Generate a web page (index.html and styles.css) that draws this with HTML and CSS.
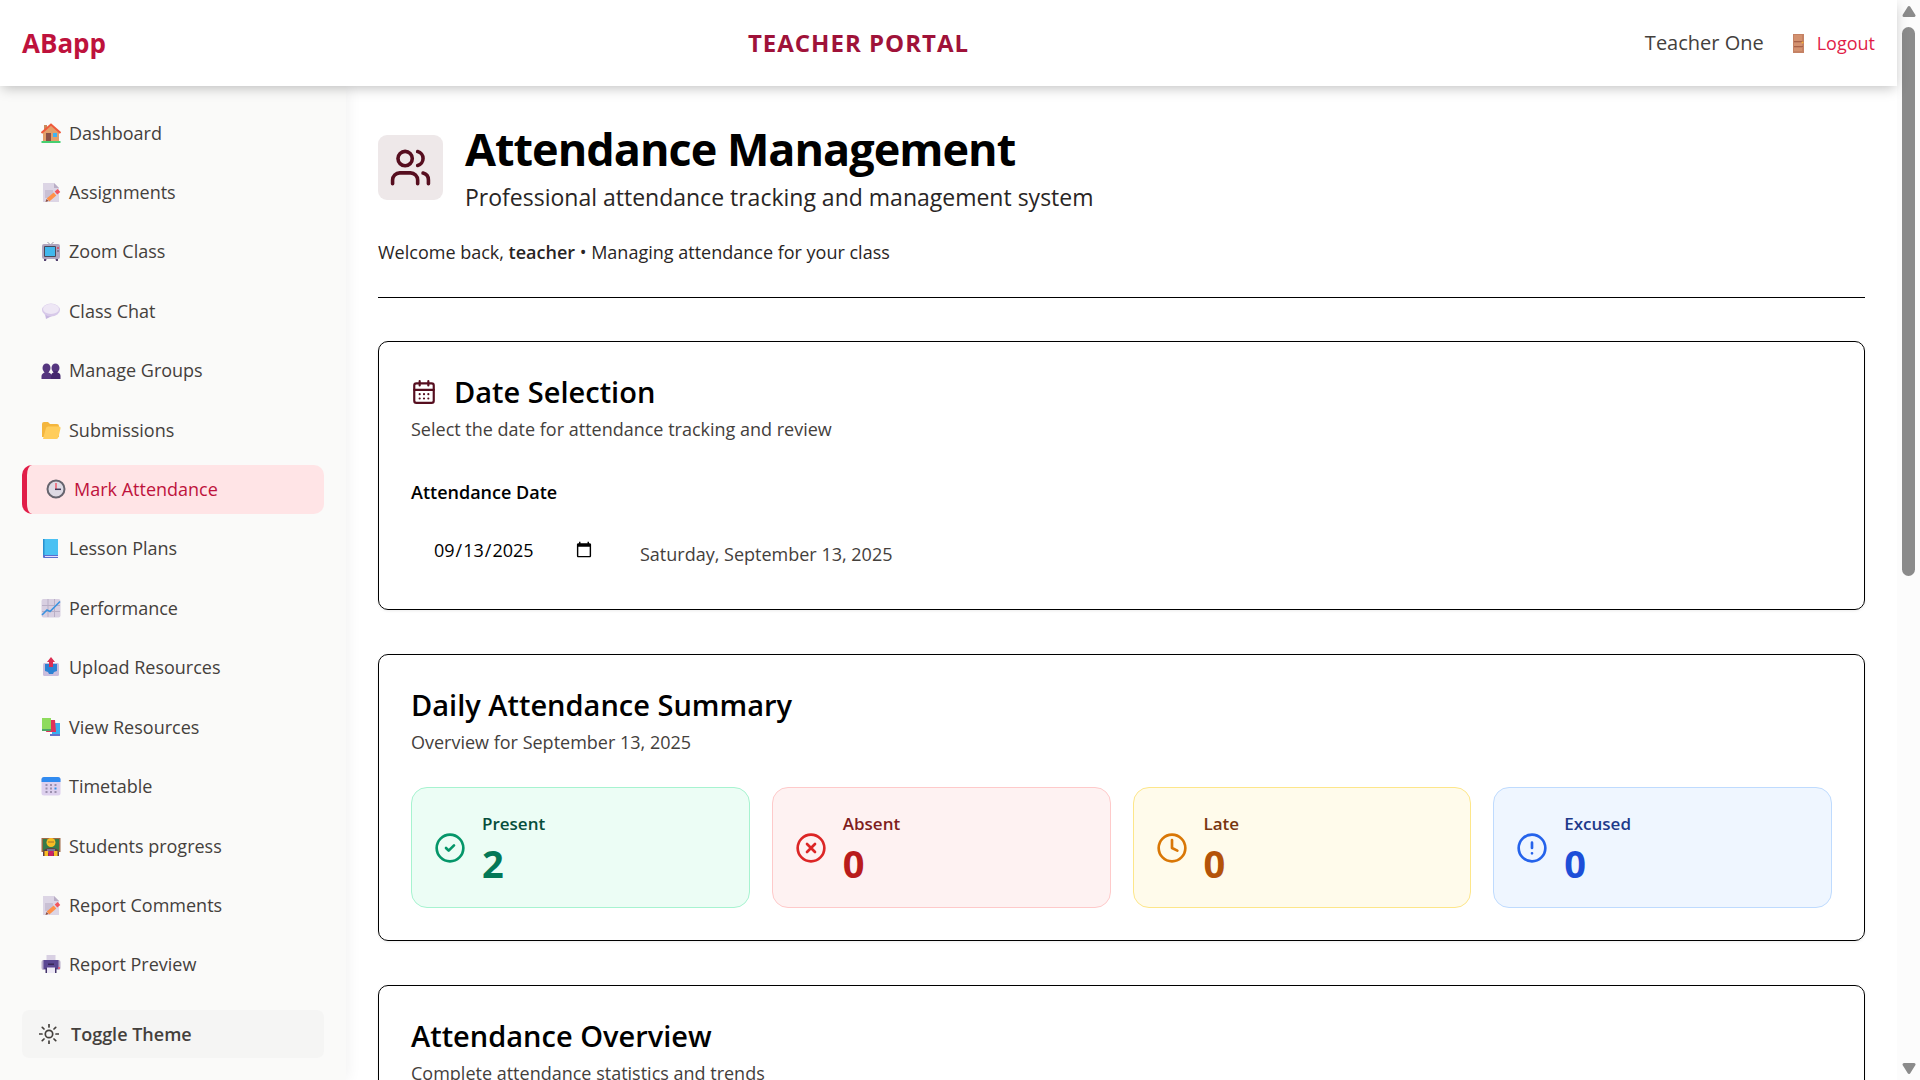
FILE: index.html
```html
<!DOCTYPE html>
<html lang="en">
<head>
<meta charset="utf-8">
<meta name="viewport" content="width=device-width, initial-scale=1">
<title>ABapp Teacher Portal</title>
<link rel="stylesheet" href="styles.css">
</head>
<body>
<div class="app">
  <header class="topbar">
    <a class="logo" href="#">ABapp</a>
    <div class="portal">TEACHER PORTAL</div>
    <div class="account">
      <span class="user">Teacher One</span>
      <button class="logout" type="button">
        <svg class="emoji" viewBox="0 0 20 20" aria-hidden="true"><path fill="#c58264" d="M5 1h11v19H5z"/><path fill="#d3916f" d="M6 2h8v6H6zM6 10h8v3H6zM6 15h8v3H6z"/><path stroke="#a86148" d="M6 8.500h9M6 13.500h9"/><circle cx="14.500" cy="9.500" r="1" fill="#f5b43c"/></svg>
        Logout
      </button>
    </div>
  </header>

  <div class="body">
    <aside class="sidebar">
      <nav class="nav" aria-label="Main">
        <a class="item" href="#"><svg class="emoji" viewBox="0 0 20 20" aria-hidden="true"><path fill="#c98a5b" d="M3 2h3v6H3z"/><path fill="#e3a06b" d="M2 9l8-7 8 7v10H2z"/><path fill="none" stroke="#ef5a3c" stroke-width="2" d="M.500 10L10 1.500 19.500 10"/><path fill="#8b5147" d="M5 10h5v9H5z"/><path fill="#3fb4f2" d="M12 10h4v4h-4z"/><path fill="#45cf70" d="M.500 18h19v2H.500z"/></svg>Dashboard</a>
        <a class="item" href="#"><svg class="emoji" viewBox="0 0 20 20" aria-hidden="true"><path fill="#dcd5e5" d="M2 1h11l5 5v14H2z"/><path fill="#b9aec6" d="M13 1l5 5h-5z"/><path fill="#c9c0d4" d="M4 8h8v8H4z"/><path stroke="#ff9149" stroke-width="4" d="M7 18l7-6"/><path stroke="#f2555c" stroke-width="4" d="M15 11l3-2.500"/><path fill="#8a4a3c" d="M4.500 20l1-3 2 2z"/></svg>Assignments</a>
        <a class="item" href="#"><svg class="emoji" viewBox="0 0 20 20" aria-hidden="true"><path fill="none" stroke="#9c98a5" d="M6.500 1l3 3 3-3"/><path fill="#54416f" d="M3 16h3l-1 4H3zM14 16h3v4h-2z"/><rect x="1" y="3" width="18" height="15" rx="2" fill="#b0a5be"/><rect x="3" y="5" width="12" height="11" rx="1" fill="#4b4859"/><path fill="#41b8ed" d="M4 6h10v9H4z"/><circle cx="17" cy="7" r="1" fill="#d9425a"/><circle cx="17" cy="10" r="1" fill="#756a84"/></svg>Zoom Class</a>
        <a class="item" href="#"><svg class="emoji" viewBox="0 0 20 20" aria-hidden="true"><path fill="#c6b5df" d="M4 13l1 5 6-3z"/><ellipse cx="10" cy="9" rx="9" ry="6.500" fill="#d7c9e9"/><ellipse cx="10" cy="8" rx="8" ry="5" fill="#eee7f5"/></svg>Class Chat</a>
        <a class="item" href="#"><svg class="emoji" viewBox="0 0 20 20" aria-hidden="true"><g fill="#54357f"><ellipse cx="5.500" cy="8" rx="4" ry="4.500"/><path d="M.500 19v-3c0-2 2-3 3-3.500V11h4v1.500c2 .500 3 1.500 3 3.500v3z"/><ellipse cx="14.500" cy="8" rx="4" ry="4.500"/></g><path fill="#45286f" d="M10 19v-3c0-2 1-3 2.500-3.500V11h4v1.500c2 .500 3 1.500 3 3.500v3z"/></svg>Manage Groups</a>
        <a class="item" href="#"><svg class="emoji" viewBox="0 0 20 20" aria-hidden="true"><path fill="#f4b63e" d="M1 4q0-2 2-2h4l2 2h7q2 0 2 2v11H1z"/><path fill="#ffcd5c" d="M5 8q.400-1.500 2-1.500h11q2 0 1.500 2L17.500 17q-.500 2-2 2H2z"/></svg>Submissions</a>
        <a class="item active" href="#" aria-current="page"><svg class="emoji" viewBox="0 0 20 20" aria-hidden="true"><circle cx="10" cy="10" r="8.500" fill="#dedae4" stroke="#66646e" stroke-width="2"/><path stroke="#f05a6b" stroke-width="1.500" d="M10 4v6"/><path stroke="#433957" stroke-width="1.500" d="M9 10.300h6"/></svg>Mark Attendance</a>
        <a class="item" href="#"><svg class="emoji" viewBox="0 0 20 20" aria-hidden="true"><path fill="#4bc1f3" d="M2 1h15v16H2z"/><path fill="#2990cf" d="M2 1h1.500v16H2z"/><path fill="#5a6fd0" d="M2 17h15v3H3q-1 0-1-1z"/><path stroke="#e4dfff" d="M4 18.500h13"/></svg>Lesson Plans</a>
        <a class="item" href="#"><svg class="emoji" viewBox="0 0 20 20" aria-hidden="true"><rect x=".500" y="1" width="19" height="18.500" rx="2" fill="#d8cfe1"/><path stroke="#b9afc6" d="M7 1v18M13.500 1v18M1 7.500h18M1 13.500h18"/><path fill="none" stroke="#3b93df" stroke-width="1.600" d="M1 17l5-5 3 1.500L19 3.500"/></svg>Performance</a>
        <a class="item" href="#"><svg class="emoji" viewBox="0 0 20 20" aria-hidden="true"><rect x="2" y="6" width="16" height="13" rx="1.500" fill="#c9bddd"/><path fill="#2c82d4" d="M4 7h12v7l-3 1-1 2H8l-1-2-3-1z"/><path fill="#dc2e53" d="M10 0l4 5h-2v5H8V5H6z"/></svg>Upload Resources</a>
        <a class="item" href="#"><svg class="emoji" viewBox="0 0 20 20" aria-hidden="true"><path fill="#38aef0" d="M11 6h8v11h-8z"/><path fill="#6572cb" d="M9 17h10v2H9z"/><path fill="#df315b" d="M8 3h6l1 12H5z"/><path fill="#8edb5d" d="M1 1h9v11H1z"/><path fill="#4da767" d="M1 12h9v2H1z"/></svg>View Resources</a>
        <a class="item" href="#"><svg class="emoji" viewBox="0 0 20 20" aria-hidden="true"><rect x=".500" y="1" width="19" height="18.500" rx="2.500" fill="#ddd0ee"/><path fill="#318bf0" d="M.500 6V3.500Q.500 1 3 1h14q2.500 0 2.500 2.500V6z"/><g fill="#9b8fae"><path d="M4.500 8h2v2h-2zM9 8h2v2H9zM13.500 8h2v2h-2zM4.500 11.500h2v2h-2zM9 11.500h2v2H9zM4.500 15h2v2h-2zM9 15h2v2H9zM13.500 15h2v2h-2z"/></g><path fill="#2f91ec" d="M13.500 11.500h2v2h-2z"/></svg>Timetable</a>
        <a class="item" href="#"><svg class="emoji" viewBox="0 0 20 20" aria-hidden="true"><path fill="#a06a46" d="M.500 2h19v14H.500z"/><path fill="#377b4a" d="M2 3h16v12H2z"/><path fill="#623d43" d="M2 20v-4q1-4 8-4t8 4v4z"/><circle cx="10" cy="6.500" r="4.500" fill="#f9bd24"/><path stroke="#a77129" d="M7 6h6"/><path fill="#7a7390" d="M6 13h8v4H6z"/><path fill="#ca2265" d="M7.500 15h5v5h-5z"/><path fill="#f9bd24" d="M3.500 15H7v5H3.500zM13 15h3.500v5H13z"/></svg>Students progress</a>
        <a class="item" href="#"><svg class="emoji" viewBox="0 0 20 20" aria-hidden="true"><path fill="#dcd5e5" d="M2 1h11l5 5v14H2z"/><path fill="#b9aec6" d="M13 1l5 5h-5z"/><path fill="#c9c0d4" d="M4 8h8v8H4z"/><path stroke="#ff9149" stroke-width="4" d="M7 18l7-6"/><path stroke="#f2555c" stroke-width="4" d="M15 11l3-2.500"/><path fill="#8a4a3c" d="M4.500 20l1-3 2 2z"/></svg>Report Comments</a>
        <a class="item" href="#"><svg class="emoji" viewBox="0 0 20 20" aria-hidden="true"><path fill="#d8d0e3" d="M5.500 1h9v7h-9z"/><rect x=".500" y="6" width="19" height="10" rx="2" fill="#b7acc9"/><path fill="#5a4792" d="M2.500 6h15v9h-15z"/><path fill="#372758" d="M7 9.500h6v1.500H7z"/><path fill="#42336a" d="M4.500 14h11v5h-11z"/><path fill="#eee9f6" d="M6 13.500h8V19H6z"/><circle cx="18" cy="14" r="1" fill="#ea5067"/></svg>Report Preview</a>
      </nav>
      <button class="toggle" type="button">
        <svg class="sun" viewBox="0 0 20 20" aria-hidden="true"><circle cx="10" cy="10" r="3.700"/><path d="M10 .500v2.500M10 17v2.500M.500 10H3M17 10h2.500M3.300 3.300L5 5M15 15l1.700 1.700M16.700 3.300L15 5M5 15l-1.700 1.700"/></svg>
        Toggle Theme
      </button>
    </aside>

    <main class="main">
      <div class="page-head">
        <div class="head-row">
          <div class="head-icon">
            <svg class="line" viewBox="0 0 24 24" aria-hidden="true"><path d="M16 21v-2a4 4 0 0 0-4-4H6a4 4 0 0 0-4 4v2"/><circle cx="9" cy="7" r="4"/><path d="M22 21v-2a4 4 0 0 0-3-3.870M16 3.130a4 4 0 0 1 0 7.750"/></svg>
          </div>
          <div>
            <h1 class="title">Attendance Management</h1>
            <p class="lead">Professional attendance tracking and management system</p>
          </div>
        </div>
        <p class="welcome">Welcome back, <strong>teacher</strong> • Managing attendance for your class</p>
      </div>

      <section class="card">
        <h2 class="card-title">
          <svg class="line cal" viewBox="0 0 24 24" aria-hidden="true"><path d="M8 2v4M16 2v4"/><rect x="3" y="4" width="18" height="18" rx="2"/><path d="M3 10h18M8 14h.010M12 14h.010M16 14h.010M8 18h.010M12 18h.010M16 18h.010"/></svg>
          Date Selection
        </h2>
        <p class="card-sub">Select the date for attendance tracking and review</p>
        <label class="date-label" for="date">Attendance Date</label>
        <div class="date-row">
          <input class="date" id="date" type="date" value="2025-09-13">
          <span class="date-text">Saturday, September 13, 2025</span>
        </div>
      </section>

      <section class="card">
        <h2 class="card-title">Daily Attendance Summary</h2>
        <p class="card-sub">Overview for September 13, 2025</p>
        <div class="stats">
          <div class="stat present">
            <svg class="line" viewBox="0 0 24 24" aria-hidden="true"><circle cx="12" cy="12" r="10"/><path d="M9 12l2 2 4-4"/></svg>
            <div class="stat-text"><div class="stat-name">Present</div><div class="stat-num">2</div></div>
          </div>
          <div class="stat absent">
            <svg class="line" viewBox="0 0 24 24" aria-hidden="true"><circle cx="12" cy="12" r="10"/><path d="M15 9l-6 6M9 9l6 6"/></svg>
            <div class="stat-text"><div class="stat-name">Absent</div><div class="stat-num">0</div></div>
          </div>
          <div class="stat late">
            <svg class="line" viewBox="0 0 24 24" aria-hidden="true"><circle cx="12" cy="12" r="10"/><path d="M12 6v6l4 2"/></svg>
            <div class="stat-text"><div class="stat-name">Late</div><div class="stat-num">0</div></div>
          </div>
          <div class="stat excused">
            <svg class="line" viewBox="0 0 24 24" aria-hidden="true"><circle cx="12" cy="12" r="10"/><path d="M12 8v4M12 16h.010"/></svg>
            <div class="stat-text"><div class="stat-name">Excused</div><div class="stat-num">0</div></div>
          </div>
        </div>
      </section>

      <section class="card">
        <h2 class="card-title">Attendance Overview</h2>
        <p class="card-sub">Complete attendance statistics and trends</p>
      </section>
    </main>
  </div>
</div>
<div class="scrollbar" aria-hidden="true">
  <svg class="arrow" viewBox="0 0 14 12"><path d="M7 2l5 8H2z"/></svg>
  <div class="track"><div class="thumb"></div></div>
  <svg class="arrow" viewBox="0 0 14 12"><path d="M7 10l5-8H2z"/></svg>
</div>
</body>
</html>
```
FILE: styles.css
```css
* { box-sizing: border-box; }

body {
  margin: 0;
  display: flex;
  height: 100vh;
  overflow: hidden;
  background: #fff;
  color: #000;
  font: 400 18px/26px "Open Sans", "Noto Sans", sans-serif;
}

h1, h2, p { margin: 0; }
button { border: 0; background: none; padding: 0; font: inherit; cursor: pointer; }
a { text-decoration: none; }

.app { flex: 1; min-width: 0; display: flex; flex-direction: column; }

.topbar {
  position: relative;
  z-index: 1;
  flex: none;
  height: 86px;
  padding: 0 22px;
  display: flex;
  align-items: center;
  justify-content: space-between;
  background: #fff;
  box-shadow: 0 4px 12px -2px rgba(0, 0, 0, 0.25);
}
.logo { color: #be123c; font-size: 26px; font-weight: 700; }
.portal { color: #9f1239; font-size: 24px; font-weight: 700; letter-spacing: 1px; }
.account { display: flex; align-items: center; gap: 24px; padding-left: 34px; }
.user { color: #44403c; font-size: 20px; font-weight: 500; }
.logout { display: flex; align-items: center; gap: 9px; color: #e11d48; font-weight: 500; }

.emoji { width: 20px; height: 20px; flex: none; }

.body { flex: 1; min-height: 0; display: flex; }

.sidebar {
  flex: none;
  width: 346px;
  padding: 22px;
  display: flex;
  flex-direction: column;
  gap: 21px;
  background: #fafaf9;
  box-shadow: 2px 0 14px rgba(0, 0, 0, 0.06);
}
.nav { flex: 1; display: flex; flex-direction: column; justify-content: space-between; }
.item {
  display: flex;
  align-items: center;
  gap: 8px;
  height: 49px;
  padding: 0 19px;
  border-radius: 10px;
  color: #44403c;
}
.active { background: #ffe4e6; color: #be123c; border-left: 5px solid #e11d48; }
.toggle {
  display: flex;
  align-items: center;
  gap: 12px;
  height: 48px;
  padding: 0 17px;
  border-radius: 7px;
  background: #f5f5f4;
  color: #44403c;
  font-weight: 600;
}
.sun { width: 20px; height: 20px; fill: none; stroke: currentColor; stroke-width: 1.700; stroke-linecap: round; }

.main {
  flex: 1;
  min-width: 0;
  padding: 33px 32px 44px;
  overflow-y: auto;
  scrollbar-width: none;
}
.page-head { padding-bottom: 32px; border-bottom: 1px solid #000; margin-bottom: 43px; }
.head-row { display: flex; align-items: center; gap: 22px; }
.head-icon {
  display: flex;
  padding: 11px;
  border-radius: 9px;
  background: #eee8e9;
  color: #560e1f;
}
.head-icon .line { width: 43px; height: 43px; }
.line {
  flex: none;
  fill: none;
  stroke: currentColor;
  stroke-width: 2;
  stroke-linecap: round;
  stroke-linejoin: round;
}
.title { font-size: 45px; line-height: 60px; font-weight: 700; letter-spacing: -1px; }
.lead { font-size: 23px; line-height: 36px; color: #292524; }
.welcome { margin-top: 24px; color: #292524; }
.welcome strong { font-weight: 600; }

.card {
  margin-bottom: 44px;
  padding: 32px;
  border: 1px solid #000;
  border-radius: 10px;
  box-shadow: 0 1px 3px rgba(0, 0, 0, 0.08);
}
.card-title {
  display: flex;
  align-items: center;
  gap: 17px;
  font-size: 29px;
  line-height: 36px;
  font-weight: 600;
}
.cal { width: 26px; height: 26px; color: #560e1f; }
.card-sub { margin-top: 6px; color: #44403c; }
.date-label { display: block; margin-top: 37px; font-weight: 600; }
.date-row { display: flex; align-items: center; gap: 23px; margin-top: 17px; }
.date {
  width: 206px;
  height: 55px;
  padding: 0 22px;
  border: 0;
  background: none;
  color: #000;
  font: inherit;
}
.date-text { padding-top: 8px; color: #44403c; }

.stats { display: grid; grid-template-columns: repeat(4, 1fr); gap: 22px; margin-top: 32px; }
.stat {
  display: flex;
  align-items: center;
  gap: 16px;
  height: 121px;
  padding: 0 22px;
  border: 1px solid;
  border-radius: 16px;
}
.stat .line { width: 32px; height: 32px; }
.stat-text { padding-top: 4px; }
.stat-name { font-size: 17px; font-weight: 600; }
.stat-num { font-size: 38px; line-height: 52px; font-weight: 700; }

.present { background: #ecfdf5; border-color: #a7f3d0; color: #059669; }
.present .stat-name { color: #064e3b; }
.present .stat-num { color: #047857; }
.absent { background: #fef2f2; border-color: #fecaca; color: #dc2626; }
.absent .stat-name { color: #7f1d1d; }
.absent .stat-num { color: #b91c1c; }
.late { background: #fffbeb; border-color: #fde68a; color: #d97706; }
.late .stat-name { color: #78350f; }
.late .stat-num { color: #b45309; }
.excused { background: #eff6ff; border-color: #bfdbfe; color: #2563eb; }
.excused .stat-name { color: #1e3a8a; }
.excused .stat-num { color: #1d4ed8; }

.scrollbar {
  flex: none;
  width: 23px;
  padding: 5px 0;
  display: flex;
  flex-direction: column;
  align-items: center;
  gap: 9px;
  background: #fcfcfc;
}
.arrow { width: 14px; height: 13px; fill: #8b8b8b; stroke: #8b8b8b; stroke-width: 3; stroke-linejoin: round; }
.track { flex: 1; }
.thumb { width: 13px; height: 53.500%; border-radius: 7px; background: #8b8b8b; }
```
